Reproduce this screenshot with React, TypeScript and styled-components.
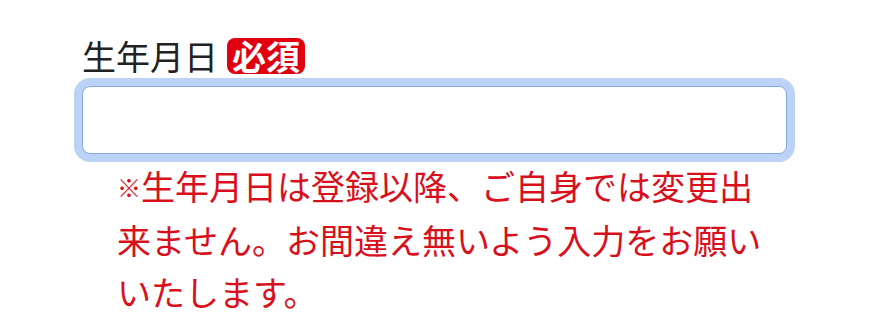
import React from "react";
import styled, { createGlobalStyle } from "styled-components";

const GlobalStyle = createGlobalStyle`
  html, body {
    margin: 0;
    padding: 0;
    background: #ffffff;
  }
  body {
    font-family: "Noto Sans CJK JP", "Noto Sans", sans-serif;
  }
`;

const Field = styled.div`
  display: flex;
  flex-direction: column;
  width: 705px;
  padding: 36px 0 0 82px;
`;

const LabelRow = styled.label`
  display: flex;
  align-items: center;
  gap: 9px;
  height: 40px;
  font-size: 34px;
  line-height: 40px;
  color: #222222;
  margin-bottom: 10px;
`;

const Badge = styled.span`
  display: inline-flex;
  align-items: center;
  justify-content: center;
  height: 36px;
  padding: 0 5px;
  border-radius: 8px;
  background: #e10010;
  color: #ffffff;
  font-size: 34px;
  font-weight: 700;
  line-height: 36px;
`;

const Input = styled.input`
  box-sizing: border-box;
  width: 705px;
  height: 68px;
  margin: 0;
  padding: 0 16px;
  border: 1.5px solid #86aae6;
  border-radius: 8px;
  background: #ffffff;
  box-shadow: 0 0 0 8px #bcd3f6;
  outline: none;
  font-family: inherit;
  font-size: 30px;
`;

const Note = styled.p`
  margin: 6px 0 0 35px;
  width: 652px;
  font-size: 34px;
  line-height: 52.5px;
  color: #d8101c;
`;

const Mark = styled.span`
  font-size: 24px;
  font-weight: 700;
  vertical-align: 3px;
`;

export default function App() {
  return (
    <>
      <GlobalStyle />
      <Field>
        <LabelRow>
          生年月日
          <Badge>必須</Badge>
        </LabelRow>
        <Input type="text" />
        <Note>
          <Mark>※</Mark>生年月日は登録以降、ご自身では変更出来ません。お間違え無いよう入力をお願いいたします。
        </Note>
      </Field>
    </>
  );
}
